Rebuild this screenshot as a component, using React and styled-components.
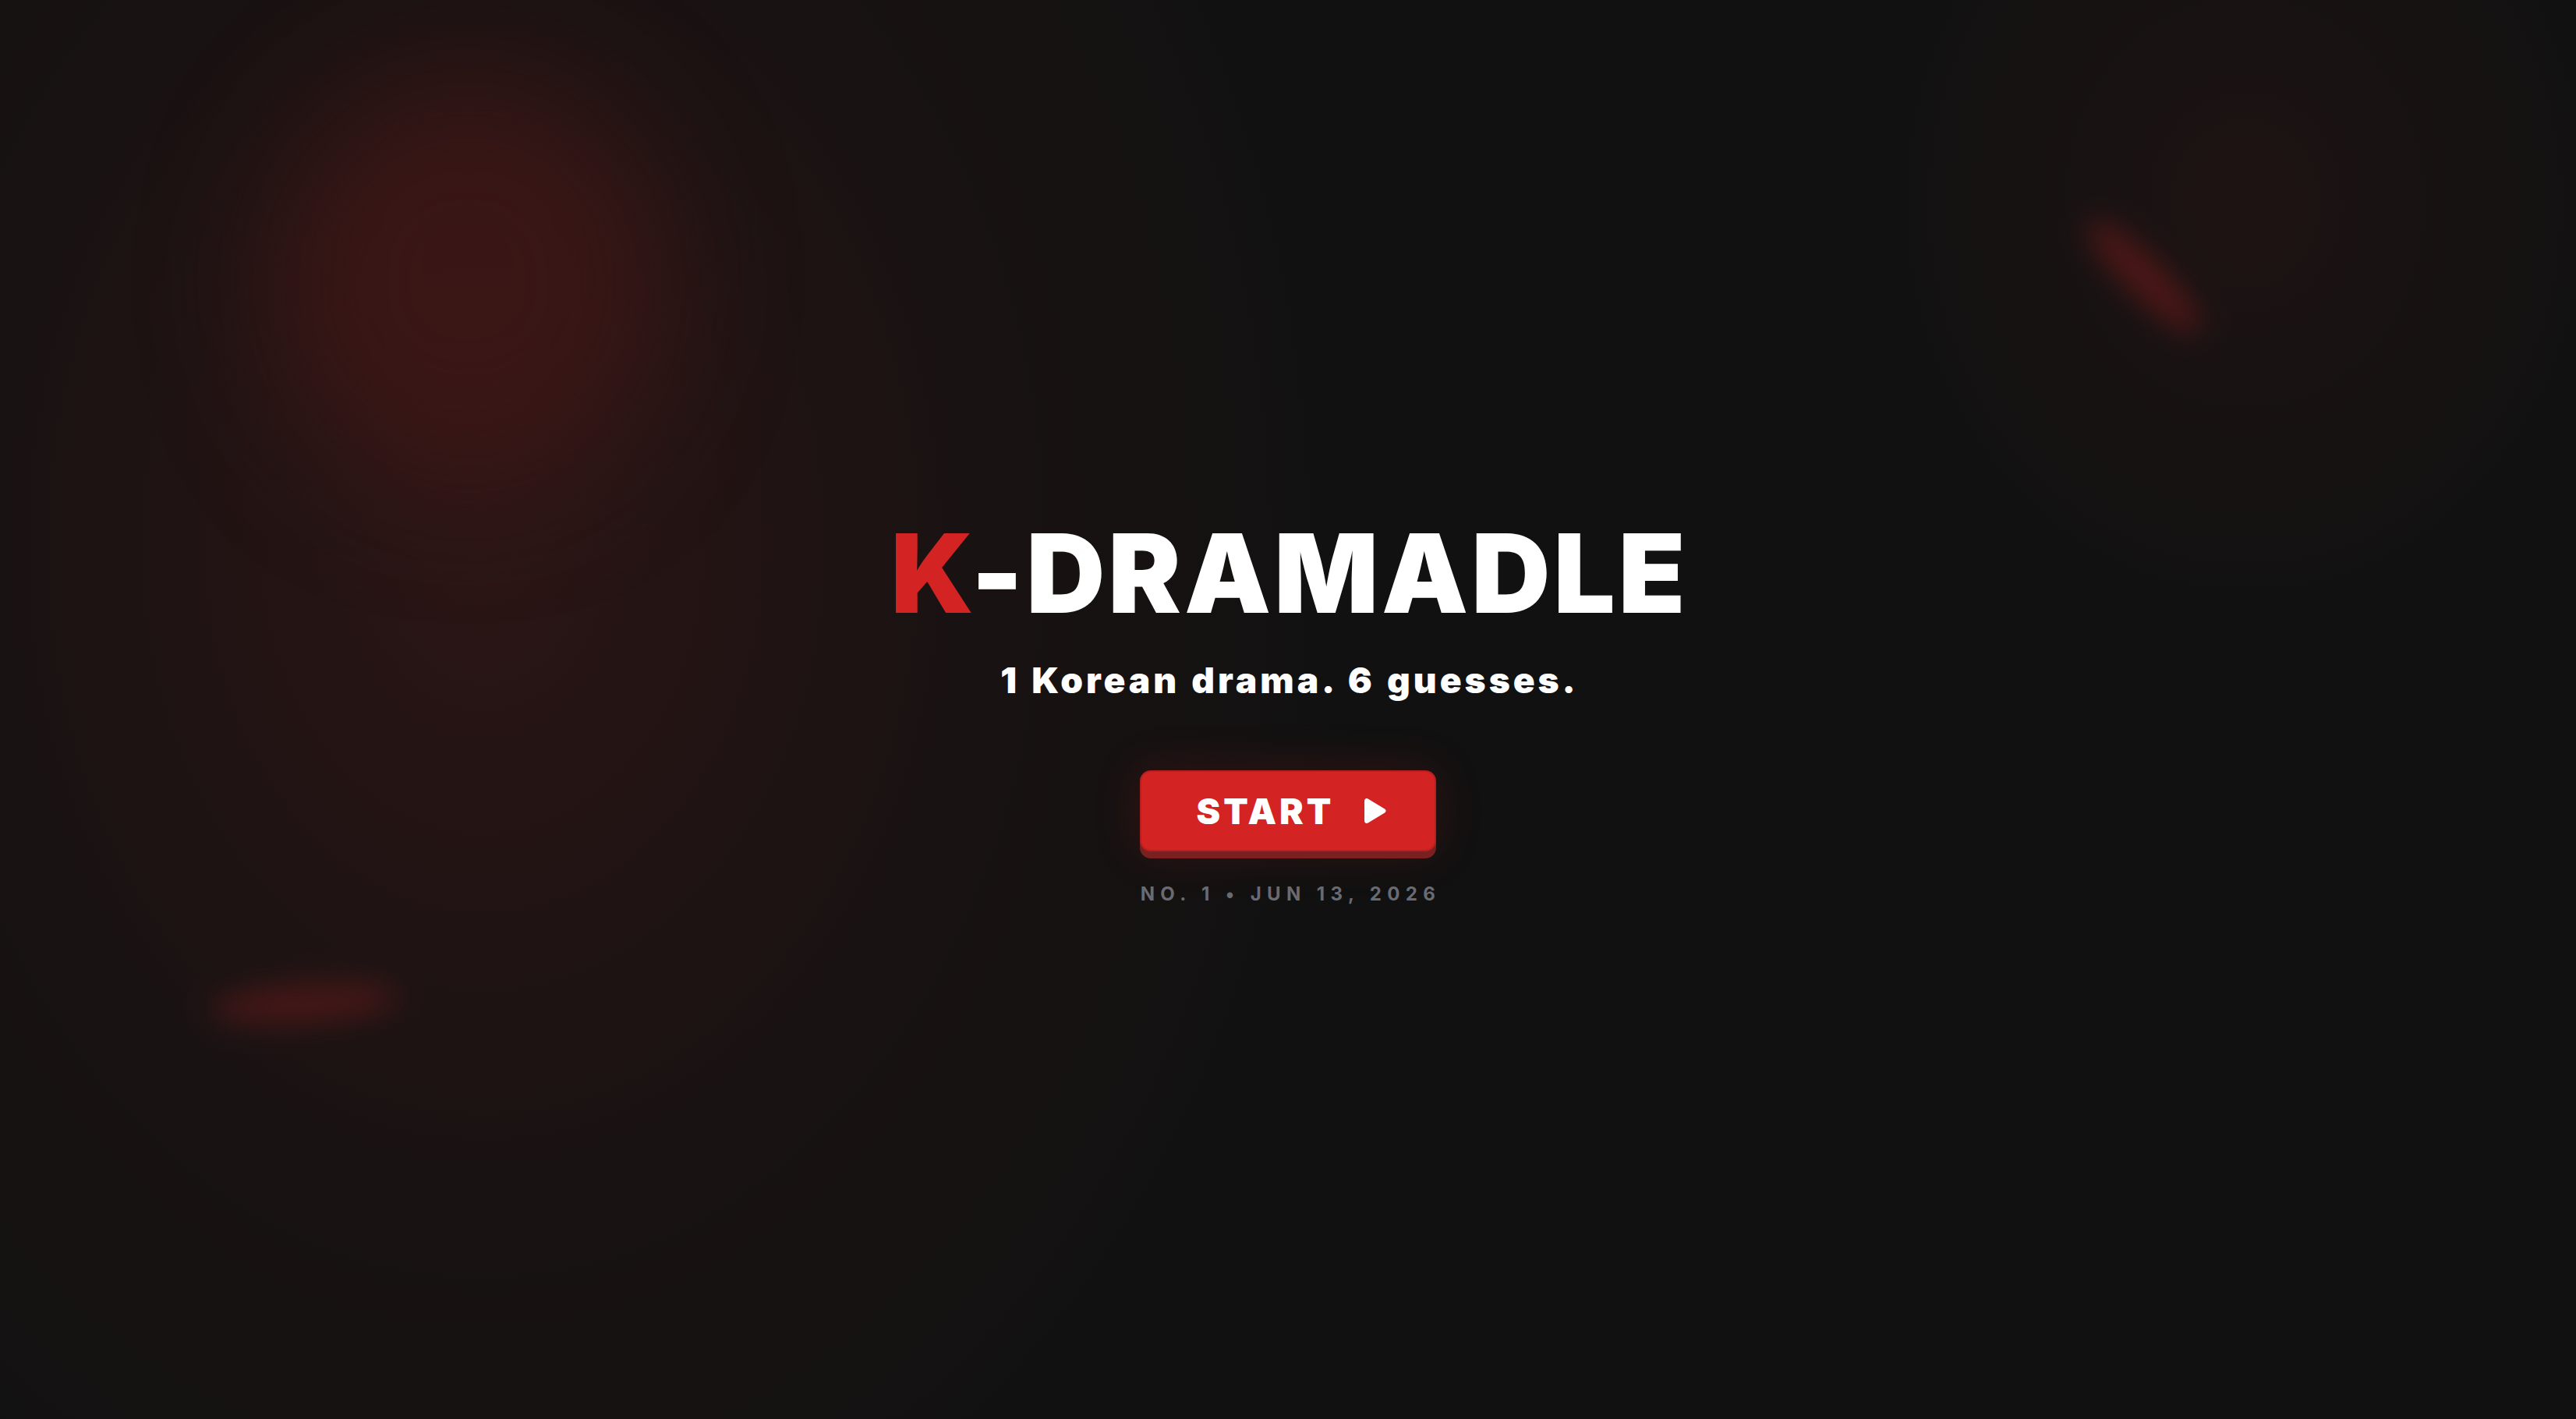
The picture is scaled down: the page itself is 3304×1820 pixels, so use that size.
import React from "react";
import styled, { createGlobalStyle } from "styled-components";

const Global = createGlobalStyle`
  html, body { margin: 0; padding: 0; background: #111111; }
  body { font-family: Inter, "Liberation Sans", sans-serif; }
`;

const Page = styled.main`
  position: relative;
  width: 100vw;
  height: 100vh;
  overflow: hidden;
  display: flex;
  flex-direction: column;
  align-items: center;
  justify-content: center;
  padding-top: 6px;
  box-sizing: border-box;
  background:
    radial-gradient(ellipse 700px 800px at 2880px 260px, rgba(40, 20, 20, 0.55), rgba(40, 20, 20, 0) 70%),
    radial-gradient(ellipse 1150px 1500px at 620px 700px, rgba(48, 22, 22, 0.85), rgba(40, 20, 20, 0.35) 55%, rgba(17, 17, 17, 0) 100%),
    #111111;
`;

const Glow = styled.div`
  position: absolute;
  pointer-events: none;
  border-radius: 50%;
  background: ${(p) => p.$color};
  filter: blur(${(p) => p.$blur}px);
  transform: rotate(${(p) => p.$rotate || 0}deg);
`;

const Content = styled.div`
  position: relative;
  z-index: 1;
  display: flex;
  flex-direction: column;
  align-items: center;
`;

const Title = styled.h1`
  margin: 0 -4px 0 0;
  font-family: Inter, "Liberation Sans", sans-serif;
  font-weight: 900;
  font-size: 140px;
  line-height: 1;
  letter-spacing: 4px;
  color: #ffffff;
`;

const Accent = styled.span`
  color: #d32323;
`;

const Subtitle = styled.p`
  margin: 44px -4px 0 0;
  font-family: Inter, "Liberation Sans", sans-serif;
  font-weight: 900;
  font-size: 46px;
  line-height: 1;
  letter-spacing: 4px;
  word-spacing: 2px;
  color: #ffffff;
`;

const StartButton = styled.button`
  margin-top: 93px;
  width: 380px;
  height: 104px;
  display: flex;
  align-items: center;
  justify-content: center;
  gap: 36px;
  border: 2px solid #b81f1f;
  border-radius: 14px;
  background: #d32323;
  color: #ffffff;
  font-family: Inter, "Liberation Sans", sans-serif;
  font-weight: 900;
  font-size: 46px;
  letter-spacing: 4px;
  cursor: pointer;
  box-shadow: 0 9px 0 #7a2020, 0 0 60px rgba(211, 35, 35, 0.18);
  padding: 0 0 0 10px;
`;

const PlayIcon = () => (
  <svg width="32" height="34" viewBox="0 0 32 34" aria-hidden="true">
    <path
      d="M3 4.5 C3 1.5 5.5 0.2 8 1.8 L29 14.5 C31.2 15.8 31.2 18.2 29 19.5 L8 32.2 C5.5 33.8 3 32.5 3 29.5 Z"
      fill="#ffffff"
    />
  </svg>
);

const DateLine = styled.div`
  margin: 40px -7px 0 0;
  font-family: Inter, "Liberation Sans", sans-serif;
  font-weight: 700;
  font-size: 24px;
  letter-spacing: 7.4px;
  color: #6a6a72;
`;

export default function App() {
  return (
    <>
      <Global />
      <Page>
        <Glow
          $color="rgba(66, 24, 22, 0.72)"
          $blur={80}
          style={{ left: 350, top: 100, width: 500, height: 520 }}
        />
        <Glow
          $color="rgba(90, 24, 24, 0.8)"
          $blur={18}
          $rotate={45}
          style={{ left: 2650, top: 330, width: 200, height: 50 }}
        />
        <Glow
          $color="rgba(80, 24, 24, 0.75)"
          $blur={18}
          $rotate={-4}
          style={{ left: 270, top: 1260, width: 240, height: 54 }}
        />
        <Content>
          <Title>
            <Accent>K</Accent>-DRAMADLE
          </Title>
          <Subtitle>1 Korean drama. 6 guesses.</Subtitle>
          <StartButton>
            START
            <PlayIcon />
          </StartButton>
          <DateLine>NO. 1 • JUN 13, 2026</DateLine>
        </Content>
      </Page>
    </>
  );
}
